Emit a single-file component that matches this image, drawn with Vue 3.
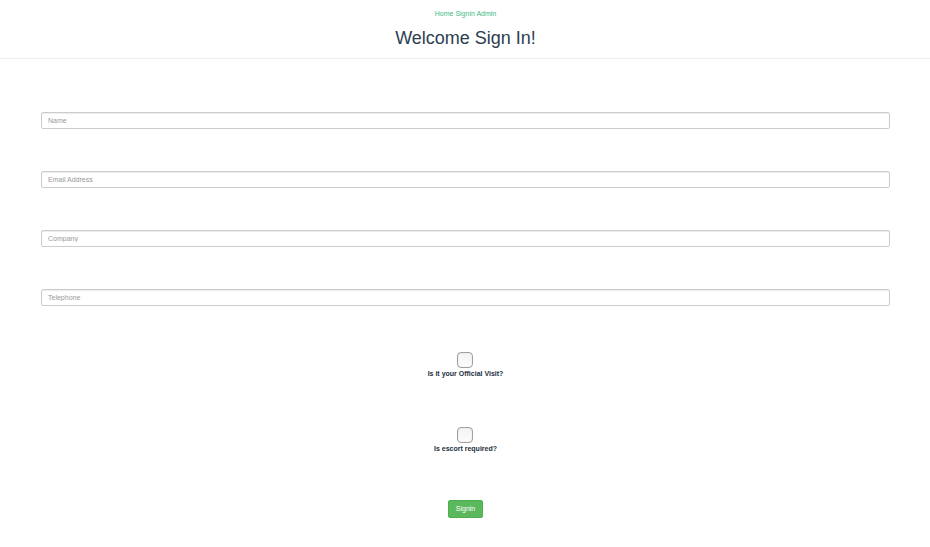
<script setup>
import { reactive } from 'vue'

const fields = [
  { id: 'name', label: 'Name', type: 'text' },
  { id: 'email', label: 'Email Address', type: 'email' },
  { id: 'company', label: 'Company', type: 'text' },
  { id: 'telephone', label: 'Telephone', type: 'tel' }
]
const checks = [
  { id: 'official', label: 'Is it your Official Visit?' },
  { id: 'escort', label: 'Is escort required?' }
]
const form = reactive({ name: '', email: '', company: '', telephone: '', official: false, escort: false })
</script>

<template>
  <div class="page">
    <header>
      <nav><a href="#/">Home</a> <a href="#/signin">Signin</a> <a href="#/admin">Admin</a></nav>
      <h1>Welcome Sign In!</h1>
    </header>
    <form @submit.prevent>
      <div v-for="f in fields" :key="f.id" class="field">
        <input :id="f.id" v-model="form[f.id]" :type="f.type" :placeholder="f.label" :aria-label="f.label">
      </div>
      <div class="checks">
        <div v-for="c in checks" :key="c.id" class="check">
          <input :id="c.id" v-model="form[c.id]" type="checkbox">
          <label :for="c.id">{{ c.label }}</label>
        </div>
      </div>
      <button type="submit">Signin</button>
    </form>
  </div>
</template>

<style>
body {
  margin: 0;
  background: #fff;
}
</style>

<style scoped>
.page {
  font-family: "Liberation Sans", Arial, sans-serif;
  font-size: 7px;
  line-height: 10px;
  color: #2c3e50;
  text-align: center;
}
header {
  padding: 9px 0 0 1px;
  border-bottom: 1px solid #eee;
}
a {
  color: #42b983;
  text-decoration: none;
}
h1 {
  margin: 9px 0;
  font-size: 18px;
  line-height: 21px;
  font-weight: 400;
}
form {
  display: flex;
  flex-direction: column;
  align-items: center;
  padding: 53px 40px 0 41px;
}
.field {
  display: flex;
  width: 100%;
  margin-bottom: 42px;
}
.field input {
  box-sizing: border-box;
  width: 100%;
  height: 17px;
  padding: 3px 6px;
  border: 1px solid #ccc;
  border-radius: 2px;
  box-shadow: inset 0 1px 1px rgba(0, 0, 0, 0.075);
  font: inherit;
  color: #555;
}
.field input::placeholder {
  color: #999;
}
.checks {
  display: grid;
  gap: 48px;
  margin-top: 4px;
}
.check {
  display: flex;
  flex-direction: column;
  align-items: center;
  gap: 1px;
}
.check input {
  appearance: none;
  box-sizing: border-box;
  width: 16px;
  height: 16px;
  margin: 0;
  border: 1px solid #a0a0a0;
  border-radius: 4px;
  background: linear-gradient(#f3f3f3, #fdfdfd);
  box-shadow: inset 0 0 1px #bbb;
}
.check input:checked {
  background: #5cb85c;
}
.check label {
  font-weight: 700;
  color: #212f3d;
}
button {
  margin-top: 46px;
  padding: 3px 7px;
  border: 1px solid #4cae4c;
  border-radius: 2px;
  background: #5cb85c;
  color: #fff;
  font: inherit;
}
</style>
